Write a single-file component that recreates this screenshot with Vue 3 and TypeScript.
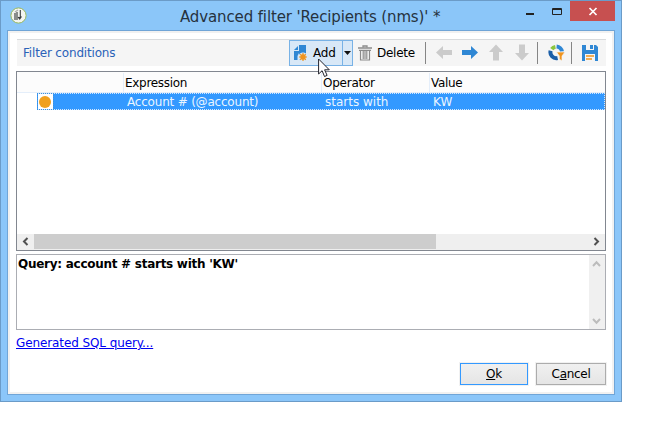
<script setup lang="ts">
interface Condition {
  expression: string
  operator: string
  value: string
}

const conditions: Condition[] = [
  { expression: 'Account # (@account)', operator: 'starts with', value: 'KW' },
]
</script>

<template>
  <div class="window">
    <header class="titlebar">
      <svg class="logo" width="17" height="17" viewBox="0 0 17 17">
        <circle cx="8.5" cy="8.5" r="7.6" fill="#f4f5f0" stroke="#9cba5c" />
        <path d="M5 6v7M7 5v8" stroke="#8b8d8b" stroke-width="2" />
        <path d="M5 5l3-2" stroke="#b0b1ae" stroke-width="1.4" />
        <path d="M10.3 3v7.5h-2M11.5 9.5L9.7 12 8 10" fill="none" stroke="#3c3e3e" stroke-width="1.1" />
      </svg>
      <h1 class="title"><span class="t-title">Advanced filter 'Recipients (nms)' *</span></h1>
      <div class="controls">
        <svg width="45" height="20" viewBox="0 0 45 20">
          <path d="M1 13h8" stroke="#222" stroke-width="2" />
          <path d="M27.5 7.5h9v6h-9zM27 8.5h10" fill="none" stroke="#222" />
        </svg>
        <div class="close">
          <svg width="10" height="9" viewBox="0 0 10 9"><path d="M1.5 1l7 7M8.5 1l-7 7" stroke="#fff" stroke-width="1.7" /></svg>
        </div>
      </div>
    </header>

    <main class="client">
      <div class="toolbar">
        <span class="caption">Filter conditions</span>
        <div class="add">
          <svg class="add-icon" width="14" height="17" viewBox="0 0 14 17">
            <path d="M5 0h7v15H0V6h5z" fill="#2f87d4" />
            <path d="M0 5l4-4v4z" fill="#2f87d4" />
            <path d="M5 8v7h-1.5v-4z" fill="#d8e8f7" />
            <circle cx="9" cy="12" r="4.6" fill="#d8e8f7" />
            <path d="M9 8v8M5 12h8M6.2 9.2l5.6 5.6M11.8 9.2l-5.6 5.6" stroke="#f0941e" stroke-width="1.2" />
            <circle cx="9" cy="12" r="2.7" fill="#f0941e" />
          </svg>
          <span class="t-add">Add</span>
          <span class="drop"><svg width="7" height="4" viewBox="0 0 7 4"><path d="M0 0h7L3.5 4z" fill="#111" /></svg></span>
          <svg class="cursor" width="12" height="20" viewBox="0 0 12 20">
            <path d="M.6 1v15l3.5-3.3 2.4 5.8 2.6-1.1-2.5-5.6h4.7z" fill="#fff" stroke="#20222b" />
          </svg>
        </div>
        <svg class="trash" width="14" height="16" viewBox="0 0 14 16">
          <path d="M5 2.5V1h4v1.5" fill="none" stroke="#8b8b8b" stroke-width="1.3" />
          <path d="M0 3h14M1 5.3h12" stroke="#8b8b8b" stroke-width="1.3" />
          <path d="M2.5 5v10h9V5M5.2 6v8M8.8 6v8M7 6v8" fill="none" stroke="#8b8b8b" stroke-width="1.15" />
        </svg>
        <span class="t-delete">Delete</span>
        <i class="sep sep-a"></i>
        <svg class="arrows" width="96" height="17" viewBox="0 0 96 17">
          <path d="M0 8.5L7 2v4h9v5H7v4z" fill="#cbcbcb" />
          <path d="M42 8.5L35 2v4h-9v5h9v4z" fill="#2f87d4" />
          <path d="M60 .5L67 8h-4v8.5h-6V8h-4z" fill="#cbcbcb" />
          <path d="M86 16.5L79 9h4V.5h6V9h4z" fill="#cbcbcb" />
        </svg>
        <i class="sep sep-b"></i>
        <svg class="chart" width="17" height="17" viewBox="0 0 17 17">
          <path d="M7.4 2.9A5.8 5.8 0 0 0 3.8 5.2" fill="none" stroke="#8cc63f" stroke-width="4" />
          <path d="M2.6 6.8A5.9 5.9 0 0 0 9.6 14" fill="none" stroke="#1b5ea8" stroke-width="4" />
          <path d="M8.6 2.5A5.9 5.9 0 0 1 14 7.6" fill="none" stroke="#2f87d4" stroke-width="4" />
          <path d="M8.5 8h8.5l-3 4v5L11.3 15V12z" fill="#f0941e" stroke="#f5f5f5" stroke-width=".7" />
        </svg>
        <i class="sep sep-c"></i>
        <svg class="save" width="16" height="16" viewBox="0 0 16 16">
          <path d="M0 0h14l2 2v14H0z" fill="#2f87d4" />
          <path d="M4 0h8v5H4z" fill="#f5f5f5" />
          <path d="M8 0h3v4H8z" fill="#2f87d4" />
          <path d="M3 9h10v7H3z" fill="#f5f5f5" />
          <path d="M4 11h8M4 14h6" stroke="#f0941e" stroke-width="1.4" />
        </svg>
      </div>

      <section class="list">
        <div class="row head">
          <span class="c-icon"></span>
          <span class="c-expr"><b class="t-expr">Expression</b></span>
          <span class="c-op"><b class="t-op">Operator</b></span>
          <span class="c-val"><b class="t-val">Value</b></span>
        </div>
        <div v-for="c in conditions" :key="c.expression" class="row selected">
          <span class="mark"><i class="dot"></i></span>
          <span class="d-expr">{{ c.expression }}</span>
          <span class="d-op">{{ c.operator }}</span>
          <span class="d-val">{{ c.value }}</span>
        </div>
        <div class="hscroll">
          <svg class="chev" width="17" height="15" viewBox="0 0 17 15"><path d="M10.5 4L7 7.5l3.5 3.5" fill="none" stroke="#505050" stroke-width="2" /></svg>
          <span class="thumb"></span>
          <svg class="chev end" width="17" height="15" viewBox="0 0 17 15"><path d="M6.5 4L10 7.5 6.5 11" fill="none" stroke="#505050" stroke-width="2" /></svg>
        </div>
      </section>

      <section class="query">
        <p class="query-text"><span class="t-query">Query: account # starts with 'KW'</span></p>
        <div class="vscroll">
          <svg width="16" height="16" viewBox="0 0 16 16"><path d="M4 11l3.5-3.7L11 11" fill="none" stroke="#bcbcbc" stroke-width="2" /></svg>
          <svg width="16" height="16" viewBox="0 0 16 16"><path d="M4 6l3.5 3.7L11 6" fill="none" stroke="#bcbcbc" stroke-width="2" /></svg>
        </div>
      </section>

      <a class="sql">Generated SQL query...</a>

      <footer class="actions">
        <button class="btn primary"><span><u>O</u>k</span></button>
        <button class="btn"><span>C<u>a</u>ncel</span></button>
      </footer>
    </main>
  </div>
</template>

<style>
body { background: #fff; }
</style>

<style scoped>
* { box-sizing: border-box; }
.window {
  width: 622px; height: 402px; padding: 0 6px;
  border: 1px solid #6b9bc8; background: #8bc6f9;
  font: 12px/16px "DejaVu Sans", sans-serif; color: #000; white-space: nowrap;
}
.titlebar { display: flex; height: 29px; }
.logo { margin: 6px 0 0 3px; flex: none; }
.title { margin: 5px 0 0 153px; font-size: 15px; line-height: 22px; font-weight: 400; color: #26323e; width: 262px; flex: none; }
.t-title { letter-spacing: -0.13px; }
.controls { display: flex; margin-left: 83px; }
.controls > svg { flex: none; }
.close { width: 45px; height: 20px; background: #c75050; display: flex; align-items: center; justify-content: center; padding-top: 1px; flex: none; }
.client {
  width: 608px; height: 365px; padding: 6px 6px 0;
  border: 1px solid #70a5d7; background: #fff; box-shadow: inset 0 0 0 2px #f1f1f1;
}
.toolbar { display: flex; align-items: flex-start; width: 589px; height: 27px; margin: 2px 2px 0 3px; background: #f5f5f5; border-top: 1px solid #d9dbdd; }
.caption { width: 272px; padding: 5px 0 0 6px; color: #2a62b8; letter-spacing: -0.17px; flex: none; }
.add { position: relative; display: flex; width: 64px; height: 26px; border: 1px solid #78b2e6; background: #d8e8f7; flex: none; }
.add-icon { margin: 4px 0 0 4px; flex: none; }
.t-add { width: 34px; margin: 4px 0 0 5px; letter-spacing: -0.2px; flex: none; }
.drop { height: 24px; width: 10px; border-left: 1px solid #78b2e6; display: flex; align-items: center; margin-left: -5px; padding-left: 1px; flex: none; }
.cursor { position: absolute; left: 28px; top: 17px; z-index: 2; }
.trash { margin: 5px 0 0 5px; flex: none; }
.t-delete { width: 48px; margin: 5px 0 0 5px; letter-spacing: -0.25px; flex: none; }
.sep { width: 1px; height: 22px; margin-top: 2px; background: #858585; flex: none; }
.arrows { margin: 4px 0 0 10px; flex: none; }
.sep-b { margin-left: 5px; }
.chart { margin: 4px 0 0 10px; flex: none; }
.sep-c { margin-left: 6px; }
.save { margin: 5px 0 0 10px; flex: none; }
.list { display: flex; flex-direction: column; width: 590px; height: 180px; margin: 5px 0 0 2px; border: 1px solid #828790; }
.row { display: flex; flex: none; }
.row b { font-weight: 400; }
.head { height: 21px; background: #fcfcfc; border-bottom: 1px solid #e4eefa; line-height: 20px; padding-top: 1px; }
.c-icon { width: 107px; border-right: 1px solid #e4eefa; }
.c-expr { width: 198px; padding-left: 1px; border-right: 1px solid #e4eefa; }
.c-op { width: 108px; padding-left: 1px; border-right: 1px solid #e4eefa; }
.c-val { padding-left: 1px; }
.t-expr { letter-spacing: -0.3px; }
.t-op { letter-spacing: -0.25px; }
.t-val { letter-spacing: -0.3px; }
.selected { height: 17px; margin-left: 20px; border: 1px dotted #d5e8fd; background: #3399ff; color: #eaf5ff; line-height: 17px; }
.mark { width: 15px; height: 15px; background: #fff; padding: 2px 1px; flex: none; outline: 1px dotted #3e91dd; }
.dot { display: block; width: 12px; height: 12px; border-radius: 50%; background: #f0a01e; }
.d-expr { width: 272px; padding-left: 74px; flex: none; letter-spacing: -0.2px; }
.d-op { width: 108px; flex: none; letter-spacing: 0; }
.hscroll { display: flex; height: 16px; margin-top: auto; background: #efefef; }
.chev { flex: none; }
.thumb { width: 402px; height: 15px; background: #cdcdcd; }
.end { margin-left: auto; }
.query { display: flex; width: 590px; height: 76px; margin: 3px 0 0 2px; border: 1px solid #abadb3; }
.query-text { flex: 1; margin: 1px 0 0 1px; font-weight: 700; }
.t-query { letter-spacing: -0.27px; }
.vscroll { display: flex; flex-direction: column; justify-content: space-between; width: 16px; background: #f0f0f0; }
.sql { display: block; width: max-content; margin: 5px 0 0 2px; color: #0000f0; text-decoration: underline; letter-spacing: -0.1px; }
.actions { display: flex; justify-content: flex-end; gap: 8px; margin: 12px 2px 0 0; }
.btn { width: 70px; height: 22px; padding: 0; border: 1px solid #acacac; border-radius: 0; background: linear-gradient(#f0f0f0, #e5e5e5); font: 12px/18px "DejaVu Sans", sans-serif; letter-spacing: -0.3px; color: #000; box-shadow: 0 0 0 1px #f1f1f1; }
.btn.primary { width: 68px; border-color: #3399ff; }
</style>
